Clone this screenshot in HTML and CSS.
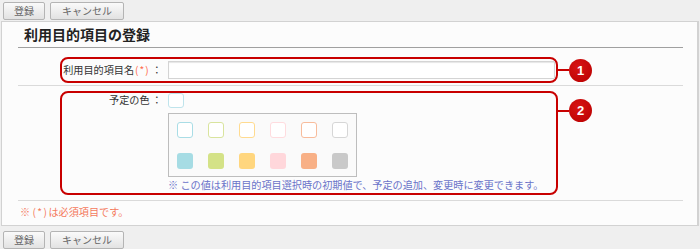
FILE: index.html
```html
<!DOCTYPE html>
<html lang="ja">
<head>
    <meta charset="UTF-8">
    <title>利用目的項目の登録</title>
    <link rel="stylesheet" href="styles.css">
</head>
<body>
    <div class="toolbar">
        <button class="btn">登録</button>
        <button class="btn btn-wide">キャンセル</button>
    </div>

    <div class="panel">
        <h2 class="title">利用目的項目の登録</h2>

        <div class="row row-name">
            <div class="mark">
                <label class="label">利用目的項目名<span class="req">(*)</span> ：</label>
                <input class="text-input" type="text">
            </div>
            <div class="callout">
                <span class="callout-line"></span>
                <span class="callout-num">1</span>
            </div>
        </div>

        <div class="row row-color">
            <div class="mark mark-tall">
                <label class="label">予定の色 ：</label>
                <div class="field">
                    <div class="current-swatch"></div>
                    <div class="palette">
                        <span class="sw sw-line" style="border-color: #a9dde6"></span>
                        <span class="sw sw-line" style="border-color: #d9e49e"></span>
                        <span class="sw sw-line" style="border-color: #ffdb90"></span>
                        <span class="sw sw-line" style="border-color: #ffdcdf"></span>
                        <span class="sw sw-line" style="border-color: #f8bc9c"></span>
                        <span class="sw sw-line" style="border-color: #d6d6d6"></span>
                        <span class="sw" style="background-color: #a6dce4"></span>
                        <span class="sw" style="background-color: #d4e287"></span>
                        <span class="sw" style="background-color: #ffd67e"></span>
                        <span class="sw" style="background-color: #ffd7db"></span>
                        <span class="sw" style="background-color: #f8b086"></span>
                        <span class="sw" style="background-color: #c9c9c9"></span>
                    </div>
                    <p class="hint">※ この値は利用目的項目選択時の初期値で、予定の追加、変更時に変更できます。</p>
                </div>
            </div>
            <div class="callout callout-top">
                <span class="callout-line"></span>
                <span class="callout-num">2</span>
            </div>
        </div>

        <p class="required-note">※ <span class="star">(*)</span>は必須項目です。</p>
    </div>

    <div class="toolbar toolbar-bottom">
        <button class="btn">登録</button>
        <button class="btn btn-wide">キャンセル</button>
    </div>
</body>
</html>
```

FILE: styles.css
```css
body {
    margin: 0;
    background-color: #efefef;
    font-family: "Noto Sans CJK JP", "Noto Sans", sans-serif;
    font-size: 10.15px;
    color: #333;
}
.toolbar {
    display: flex;
    gap: 5px;
    padding: 2px 3px 1px;
}
.toolbar-bottom {
    padding-top: 5px;
}
.btn {
    height: 18px;
    padding: 0 10px;
    font-family: inherit;
    font-size: 10px;
    line-height: 16px;
    color: #666;
    background: linear-gradient(#fafafa, #e2e2e2);
    border: 1px solid #b4b4b4;
    border-radius: 2px;
}
.btn-wide {
    padding: 0 11px;
}
.panel {
    margin: 0 1px;
    padding: 0 14px 0 16px;
    background-color: #fcfcfc;
    border: 1px solid #d2d2d2;
    border-right-width: 2px;
}
.title {
    margin: 0;
    padding-left: 6px;
    height: 25px;
    line-height: 25px;
    font-size: 14px;
    font-weight: bold;
    color: #222;
    border-bottom: 1px solid #a0a0a0;
}
.row {
    display: flex;
    align-items: center;
    padding-left: 42px;
    border-bottom: 1px solid #dadada;
}
.row-name {
    padding-top: 9px;
    padding-bottom: 2px;
}
.row-color {
    align-items: flex-start;
    padding-top: 5px;
    padding-bottom: 5px;
}
.mark {
    box-sizing: border-box;
    width: 498px;
    height: 26px;
    display: flex;
    align-items: center;
    border: 2px solid #c80000;
    border-radius: 8px;
}
.mark-tall {
    height: 104px;
    align-items: flex-start;
}
.label {
    width: 100px;
    flex-shrink: 0;
    margin-right: 6px;
    text-align: right;
    white-space: nowrap;
    line-height: 14px;
}
.req {
    margin-left: 1px;
    letter-spacing: 1px;
    color: #ff6a4a;
}
.text-input {
    box-sizing: border-box;
    width: 387px;
    height: 18px;
    margin: 0;
    padding: 0 3px;
    background-color: #fff;
    border: 1px solid #d4d4d4;
    box-shadow: inset 0 1px 1px #e6e6e6;
}
.field {
    display: flex;
    flex-direction: column;
    align-items: flex-start;
}
.current-swatch {
    box-sizing: border-box;
    width: 16px;
    height: 15px;
    background-color: #fff;
    border: 1px solid #bfe4ec;
    border-radius: 3px;
}
.palette {
    display: grid;
    grid-template-columns: repeat(6, 16px);
    column-gap: 15px;
    row-gap: 15px;
    margin-top: 5px;
    padding: 8px 8px 7px;
    background-color: #fafafa;
    border: 1px solid #bdbdbd;
}
.sw {
    box-sizing: border-box;
    width: 16px;
    height: 16px;
    border-radius: 3px;
}
.sw-line {
    background-color: #fff;
    border: 1px solid;
}
.hint {
    margin: 1px 0 0;
    line-height: 14px;
    color: #6a73c9;
    white-space: nowrap;
}
.callout {
    display: flex;
    align-items: center;
}
.callout-top {
    margin-top: 8px;
}
.callout-line {
    width: 11px;
    height: 2px;
    background-color: #c80000;
}
.callout-num {
    width: 23px;
    height: 23px;
    border-radius: 50%;
    background: radial-gradient(circle at 40% 35%, #d81414, #b80000);
    color: #fff;
    font-family: "Liberation Sans", sans-serif;
    font-size: 13px;
    font-weight: bold;
    line-height: 23px;
    text-align: center;
}
.required-note {
    margin: 0;
    padding: 3px 0 5px 2px;
    line-height: 16px;
    color: #f47a5c;
}
.star {
    letter-spacing: 1.5px;
}
```
